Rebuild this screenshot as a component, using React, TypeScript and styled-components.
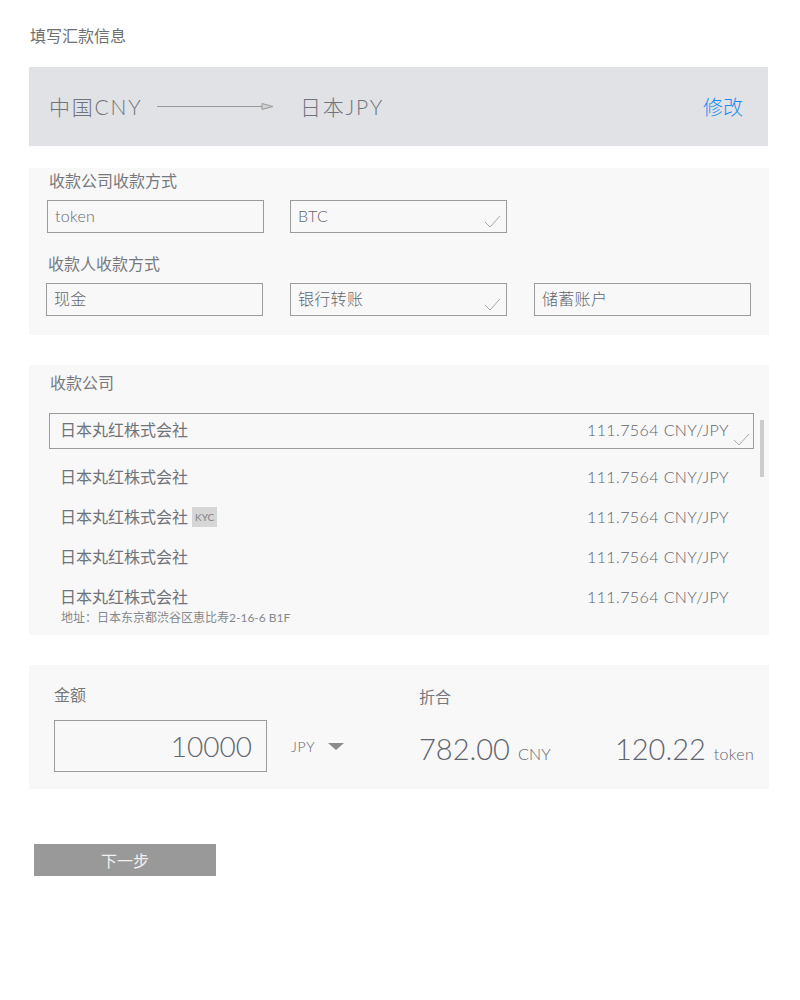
import React from 'react';
import styled, { createGlobalStyle } from 'styled-components';

const GlobalStyle = createGlobalStyle`
  html, body { margin: 0; padding: 0; background: #ffffff; }
  body {
    font-family: Lato, "Noto Sans CJK SC", sans-serif;
    font-weight: 400;
    color: #71747b;
  }
  * { box-sizing: border-box; }
`;

const Page = styled.div`
  width: 769px;
  padding: 27px 0 40px 29px;
  display: flex;
  flex-direction: column;
`;

const Title = styled.h1`
  margin: 0;
  padding-left: 1px;
  font-size: 16px;
  font-weight: 400;
  line-height: 18px;
  color: #707070;
`;

const RouteBar = styled.div`
  margin-top: 22px;
  width: 739px;
  height: 79px;
  background: #e1e2e6;
  display: flex;
  align-items: center;
  padding: 0 25px 0 20px;
  font-size: 21px;
  font-weight: 300;
  color: #6f737b;
`;

const Currency = styled.span<{ $w?: number }>`
  display: inline-block;
  width: ${(p) => (p.$w ? `${p.$w}px` : 'auto')};
  line-height: 24px;
  letter-spacing: 1.8px;
`;

const ArrowWrap = styled.span`
  display: inline-flex;
  width: 143px;
  align-items: center;
`;

const EditLink = styled.a`
  margin-left: auto;
  color: #1a8cf0;
  font-size: 20px;
  cursor: pointer;
`;

const Panel = styled.section<{ $top: number }>`
  margin-top: ${(p) => p.$top}px;
  width: 740px;
  background: #f8f8f8;
  position: relative;
`;

const MethodPanel = styled(Panel)`
  padding: 4px 0 19px;
`;

const Label = styled.div<{ $left: number; $top?: number }>`
  padding-left: ${(p) => p.$left}px;
  margin-top: ${(p) => p.$top ?? 0}px;
  font-size: 16px;
  line-height: 18px;
  color: #76787d;
`;

const FieldRow = styled.div<{ $left: number; $gap: number }>`
  margin-top: 10px;
  padding-left: ${(p) => p.$left}px;
  display: grid;
  grid-template-columns: repeat(3, 217px);
  column-gap: ${(p) => p.$gap}px;
`;

const Field = styled.div`
  position: relative;
  height: 33px;
  border: 1px solid #9b9b9b;
  padding: 0 7px;
  font-size: 16px;
  font-weight: 300;
  line-height: 29px;
  color: #62666d;
  letter-spacing: 0.3px;
`;

const CheckMark = styled.svg<{ $right: number; $bottom: number }>`
  position: absolute;
  right: ${(p) => p.$right}px;
  bottom: ${(p) => p.$bottom}px;
  width: 17px;
  height: 13px;
`;

const CompanyPanel = styled(Panel)`
  padding: 9px 0 0;
`;

const CompanyList = styled.div`
  margin-top: 21px;
  padding-left: 20px;
  display: flex;
  flex-direction: column;
`;

const CompanyRow = styled.div<{ $selected?: boolean }>`
  position: relative;
  width: 705px;
  display: grid;
  grid-template-columns: 1fr auto;
  align-items: center;
  padding: ${(p) => (p.$selected ? '6px 24px 8px 10px' : '9px 24px')};
  padding-left: 10px;
  border: 1px solid ${(p) => (p.$selected ? '#9b9b9b' : 'transparent')};
  margin-bottom: ${(p) => (p.$selected ? '8px' : '0')};
  font-size: 16px;
  line-height: 20px;
  color: #6f737a;
`;

const CompanyName = styled.span`
  display: inline-flex;
  align-items: center;
`;

const KycBadge = styled.span`
  display: inline-block;
  margin-left: 4px;
  padding: 0 3px;
  height: 20px;
  line-height: 20px;
  background: #d6d6d6;
  font-size: 10px;
  color: #7f8288;
`;

const Rate = styled.span`
  font-weight: 300;
  color: #5f636a;
  letter-spacing: 0.4px;
`;

const Address = styled.div`
  grid-column: 1 / -1;
  margin-top: 4px;
  padding-left: 1px;
  font-size: 12px;
  line-height: 14px;
  color: #85888d;
`;

const ScrollThumb = styled.div`
  position: absolute;
  left: 731px;
  top: 55px;
  width: 4px;
  height: 57px;
  background: #cccccc;
`;

const AmountPanel = styled(Panel)`
  display: flex;
  padding: 21px 15px 17px 25px;
`;

const AmountCol = styled.div`
  width: 365px;
  display: flex;
  flex-direction: column;
`;

const ResultCol = styled.div`
  flex: 1;
  display: flex;
  flex-direction: column;
  padding-top: 2px;
`;

const AmountRow = styled.div`
  margin-top: 16px;
  display: flex;
  align-items: center;
`;

const AmountBox = styled.div`
  width: 213px;
  height: 52px;
  border: 1px solid #9b9b9b;
  padding-right: 14px;
  text-align: right;
  font-size: 28px;
  font-weight: 300;
  line-height: 50px;
  color: #62666e;
`;

const UnitSelect = styled.span`
  margin-left: 24px;
  font-size: 14px;
  font-weight: 300;
  color: #62666d;
  letter-spacing: 0.8px;
`;

const Caret = styled.span`
  margin-left: 13px;
  width: 0;
  height: 0;
  border-left: 8px solid transparent;
  border-right: 8px solid transparent;
  border-top: 7px solid #8c8c8c;
`;

const ValuesRow = styled.div`
  margin-top: 25px;
  display: flex;
  justify-content: space-between;
  align-items: baseline;
`;

const Value = styled.span`
  font-size: 29px;
  font-weight: 300;
  line-height: 36px;
  color: #60646c;
`;

const ValueUnit = styled.span`
  margin-left: 8px;
  font-size: 16px;
  font-weight: 300;
  color: #62666d;
  letter-spacing: 0.3px;
`;

const NextButton = styled.button`
  margin-top: 55px;
  margin-left: 5px;
  width: 182px;
  height: 32px;
  border: none;
  background: #999999;
  color: #f1f1f1;
  font-family: Lato, "Noto Sans CJK SC", sans-serif;
  font-size: 16px;
  cursor: pointer;
`;

const Check: React.FC<{ right: number; bottom: number }> = ({ right, bottom }) => (
  <CheckMark $right={right} $bottom={bottom} viewBox="0 0 17 13">
    <polyline points="1,7 6,12 16,1" fill="none" stroke="#a8a8a8" strokeWidth="1" />
  </CheckMark>
);

const Arrow = () => (
  <svg width="117" height="9" viewBox="0 0 117 9">
    <line x1="0" y1="4.5" x2="106" y2="4.5" stroke="#9a9a9a" strokeWidth="1" />
    <polygon points="105,1.5 116,4.5 105,7.5" fill="#d0d1d4" stroke="#9a9a9a" strokeWidth="1" />
  </svg>
);

const companies = [
  { name: '日本丸红株式会社', selected: true },
  { name: '日本丸红株式会社' },
  { name: '日本丸红株式会社', kyc: true },
  { name: '日本丸红株式会社' },
  { name: '日本丸红株式会社', address: '地址：日本东京都渋谷区恵比寿2-16-6 B1F' },
];

export default function App() {
  return (
    <>
      <GlobalStyle />
      <Page>
        <Title>填写汇款信息</Title>

        <RouteBar>
          <Currency $w={108}>中国CNY</Currency>
          <ArrowWrap>
            <Arrow />
          </ArrowWrap>
          <Currency>日本JPY</Currency>
          <EditLink>修改</EditLink>
        </RouteBar>

        <MethodPanel $top={22}>
          <Label $left={20}>收款公司收款方式</Label>
          <FieldRow $left={18} $gap={26}>
            <Field>token</Field>
            <Field>
              BTC
              <Check right={5} bottom={4} />
            </Field>
          </FieldRow>
          <Label $left={19} $top={22}>收款人收款方式</Label>
          <FieldRow $left={17} $gap={27}>
            <Field>现金</Field>
            <Field>
              银行转账
              <Check right={5} bottom={4} />
            </Field>
            <Field>储蓄账户</Field>
          </FieldRow>
        </MethodPanel>

        <CompanyPanel $top={30}>
          <Label $left={21}>收款公司</Label>
          <CompanyList>
            {companies.map((c, i) => (
              <CompanyRow key={i} $selected={c.selected}>
                <CompanyName>
                  {c.name}
                  {c.kyc && <KycBadge>KYC</KycBadge>}
                </CompanyName>
                <Rate>111.7564 CNY/JPY</Rate>
                {c.address && <Address>{c.address}</Address>}
                {c.selected && <Check right={3} bottom={2} />}
              </CompanyRow>
            ))}
          </CompanyList>
          <ScrollThumb />
        </CompanyPanel>

        <AmountPanel $top={30}>
          <AmountCol>
            <Label $left={0}>金额</Label>
            <AmountRow>
              <AmountBox>10000</AmountBox>
              <UnitSelect>JPY</UnitSelect>
              <Caret />
            </AmountRow>
          </AmountCol>
          <ResultCol>
            <Label $left={0}>折合</Label>
            <ValuesRow>
              <span>
                <Value>782.00</Value>
                <ValueUnit>CNY</ValueUnit>
              </span>
              <span>
                <Value>120.22</Value>
                <ValueUnit>token</ValueUnit>
              </span>
            </ValuesRow>
          </ResultCol>
        </AmountPanel>

        <NextButton>下一步</NextButton>
      </Page>
    </>
  );
}
